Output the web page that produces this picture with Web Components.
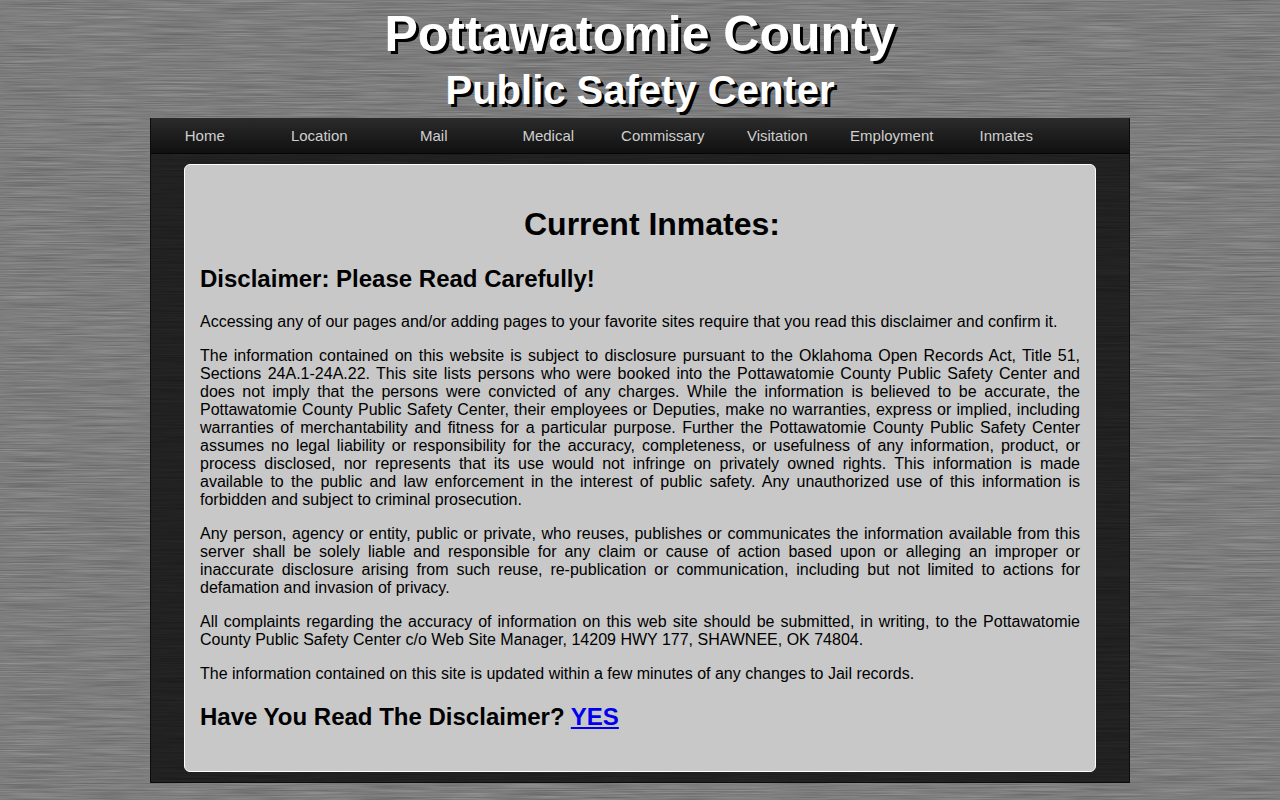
<!DOCTYPE html>
<html lang="en">
<head>
<meta charset="utf-8">
<title>Pottawatomie County Public Safety Center</title>
<style>
	html, body { margin: 0; padding: 0; }
	body { font-family: "Liberation Sans", Arial, sans-serif; background: #808080; }
</style>
</head>
<body>
<jail-page>
	<site-title slot="title" county="Pottawatomie County" center="Public Safety Center"></site-title>
	<site-nav slot="nav">
		<nav-link>Home</nav-link>
		<nav-link>Location</nav-link>
		<nav-link>Mail</nav-link>
		<nav-link>Medical</nav-link>
		<nav-link>Commissary</nav-link>
		<nav-link>Visitation</nav-link>
		<nav-link>Employment</nav-link>
		<nav-link>Inmates</nav-link>
	</site-nav>
	<content-card>
		<card-heading level="1">Current Inmates:</card-heading>
		<card-heading level="2">Disclaimer: Please Read Carefully!</card-heading>
		<card-para>Accessing any of our pages and/or adding pages to your favorite sites require that you read this disclaimer and confirm it.</card-para>
		<card-para>The information contained on this website is subject to disclosure pursuant to the Oklahoma Open Records Act, Title 51, Sections 24A.1-24A.22. This site lists persons who were booked into the Pottawatomie County Public Safety Center and does not imply that the persons were convicted of any charges. While the information is believed to be accurate, the Pottawatomie County Public Safety Center, their employees or Deputies, make no warranties, express or implied, including warranties of merchantability and fitness for a particular purpose. Further the Pottawatomie County Public Safety Center assumes no legal liability or responsibility for the accuracy, completeness, or usefulness of any information, product, or process disclosed, nor represents that its use would not infringe on privately owned rights. This information is made available to the public and law enforcement in the interest of public safety. Any unauthorized use of this information is forbidden and subject to criminal prosecution.</card-para>
		<card-para>Any person, agency or entity, public or private, who reuses, publishes or communicates the information available from this server shall be solely liable and responsible for any claim or cause of action based upon or alleging an improper or inaccurate disclosure arising from such reuse, re-publication or communication, including but not limited to actions for defamation and invasion of privacy.</card-para>
		<card-para>All complaints regarding the accuracy of information on this web site should be submitted, in writing, to the Pottawatomie County Public Safety Center c/o Web Site Manager, 14209 HWY 177, SHAWNEE, OK 74804.</card-para>
		<card-para>The information contained on this site is updated within a few minutes of any changes to Jail records.</card-para>
		<card-heading level="2">Have You Read The Disclaimer? <a href="#" style="color:#0000ee">YES</a></card-heading>
	</content-card>
</jail-page>

<script>
// Brushed metal texture, stretched turbulence mapped around a base grey
function metalTexture(base, spread, seed)
{
	const svg = `<svg xmlns="http://www.w3.org/2000/svg" width="1280" height="800">`
		+ `<filter id="m" x="0" y="0" width="100%" height="100%" color-interpolation-filters="sRGB">`
		+ `<feTurbulence type="fractalNoise" baseFrequency="0.014 0.85" numOctaves="3" seed="${seed}"/>`
		+ `<feColorMatrix values="${spread} 0 0 0 ${base} ${spread} 0 0 0 ${base} ${spread} 0 0 0 ${base} 0 0 0 0 1"/>`
		+ `</filter><rect width="1280" height="800" filter="url(#m)"/></svg>`;

	return `url("data:image/svg+xml,${encodeURIComponent(svg)}")`;
}

customElements.define('jail-page', class extends HTMLElement
{
	connectedCallback()
	{
		const shadow = this.attachShadow({ mode: 'open' });

		shadow.innerHTML = `
			<style>
				:host {
					display: block;
					height: 800px;
					overflow: hidden;
					background: #808080 ${metalTexture(0.38, 0.22, 4)};
				}

				.wrap {
					box-sizing: border-box;
					width: 980px;
					margin: 0 auto;
					background: #222 ${metalTexture(0.1, 0.06, 9)};
					border: 1px solid #0c0c0c;
					border-top: 0;
					height: 665px;
				}

				.main {
					padding: 10px 33px 0;
				}
			</style>
			<slot name="title"></slot>
			<div class="wrap">
				<slot name="nav"></slot>
				<div class="main"><slot></slot></div>
			</div>
		`;
	}
});

customElements.define('site-title', class extends HTMLElement
{
	connectedCallback()
	{
		const shadow = this.attachShadow({ mode: 'open' });

		shadow.innerHTML = `
			<style>
				:host {
					display: block;
					height: 118px;
					text-align: center;
					color: #fff;
					font-weight: bold;
				}

				h1, h2 {
					margin: 0;
					font-weight: bold;
				}

				h1 {
					padding-top: 5px;
					font-size: 50px;
					line-height: 58px;
					text-shadow: 3px 3px 0 #000;
				}

				h2 {
					font-size: 40px;
					line-height: 46px;
					margin-top: 4px;
					text-shadow: 3px 3px 0 #000;
				}
			</style>
			<h1>${this.getAttribute('county')}</h1>
			<h2>${this.getAttribute('center')}</h2>
		`;
	}
});

customElements.define('site-nav', class extends HTMLElement
{
	connectedCallback()
	{
		const shadow = this.attachShadow({ mode: 'open' });

		shadow.innerHTML = `
			<style>
				:host {
					display: block;
					box-sizing: border-box;
					height: 36px;
					background: linear-gradient(#2b2b2b, #101010);
					border-bottom: 1px solid #050505;
				}

				nav {
					display: grid;
					grid-template-columns: repeat(8, 114.5px);
					margin-left: -3.5px;
				}
			</style>
			<nav><slot></slot></nav>
		`;
	}
});

customElements.define('nav-link', class extends HTMLElement
{
	connectedCallback()
	{
		const shadow = this.attachShadow({ mode: 'open' });

		shadow.innerHTML = `
			<style>
				:host {
					display: block;
					text-align: center;
					font-size: 15px;
					line-height: 35px;
					color: #cfcfcf;
				}
			</style>
			<slot></slot>
		`;
	}
});

customElements.define('content-card', class extends HTMLElement
{
	connectedCallback()
	{
		const shadow = this.attachShadow({ mode: 'open' });

		shadow.innerHTML = `
			<style>
				:host {
					display: block;
					box-sizing: border-box;
					width: 912px;
					height: 608px;
					padding: 41px 15px 0;
					background: #c8c8c8;
					border: 1px solid #fff;
					border-radius: 6px;
					color: #000;
				}
			</style>
			<slot></slot>
		`;
	}
});

customElements.define('card-heading', class extends HTMLElement
{
	connectedCallback()
	{
		const shadow = this.attachShadow({ mode: 'open' });
		const big = this.getAttribute('level') === '1';

		shadow.innerHTML = `
			<style>
				:host {
					display: block;
					font-weight: bold;
					font-size: ${big ? 32 : 24}px;
					line-height: ${big ? 37 : 27}px;
					text-align: ${big ? 'center' : 'left'};
					margin: ${big ? '0 0 22px 24px' : '0 0 21px'};
				}

				:host(:last-child) {
					margin-top: 20px;
				}
			</style>
			<slot></slot>
		`;
	}
});

customElements.define('card-para', class extends HTMLElement
{
	connectedCallback()
	{
		const shadow = this.attachShadow({ mode: 'open' });

		shadow.innerHTML = `
			<style>
				:host {
					display: block;
					font-size: 16px;
					line-height: 18px;
					text-align: justify;
					margin-bottom: 16px;
				}
			</style>
			<slot></slot>
		`;
	}
});
</script>
</body>
</html>
